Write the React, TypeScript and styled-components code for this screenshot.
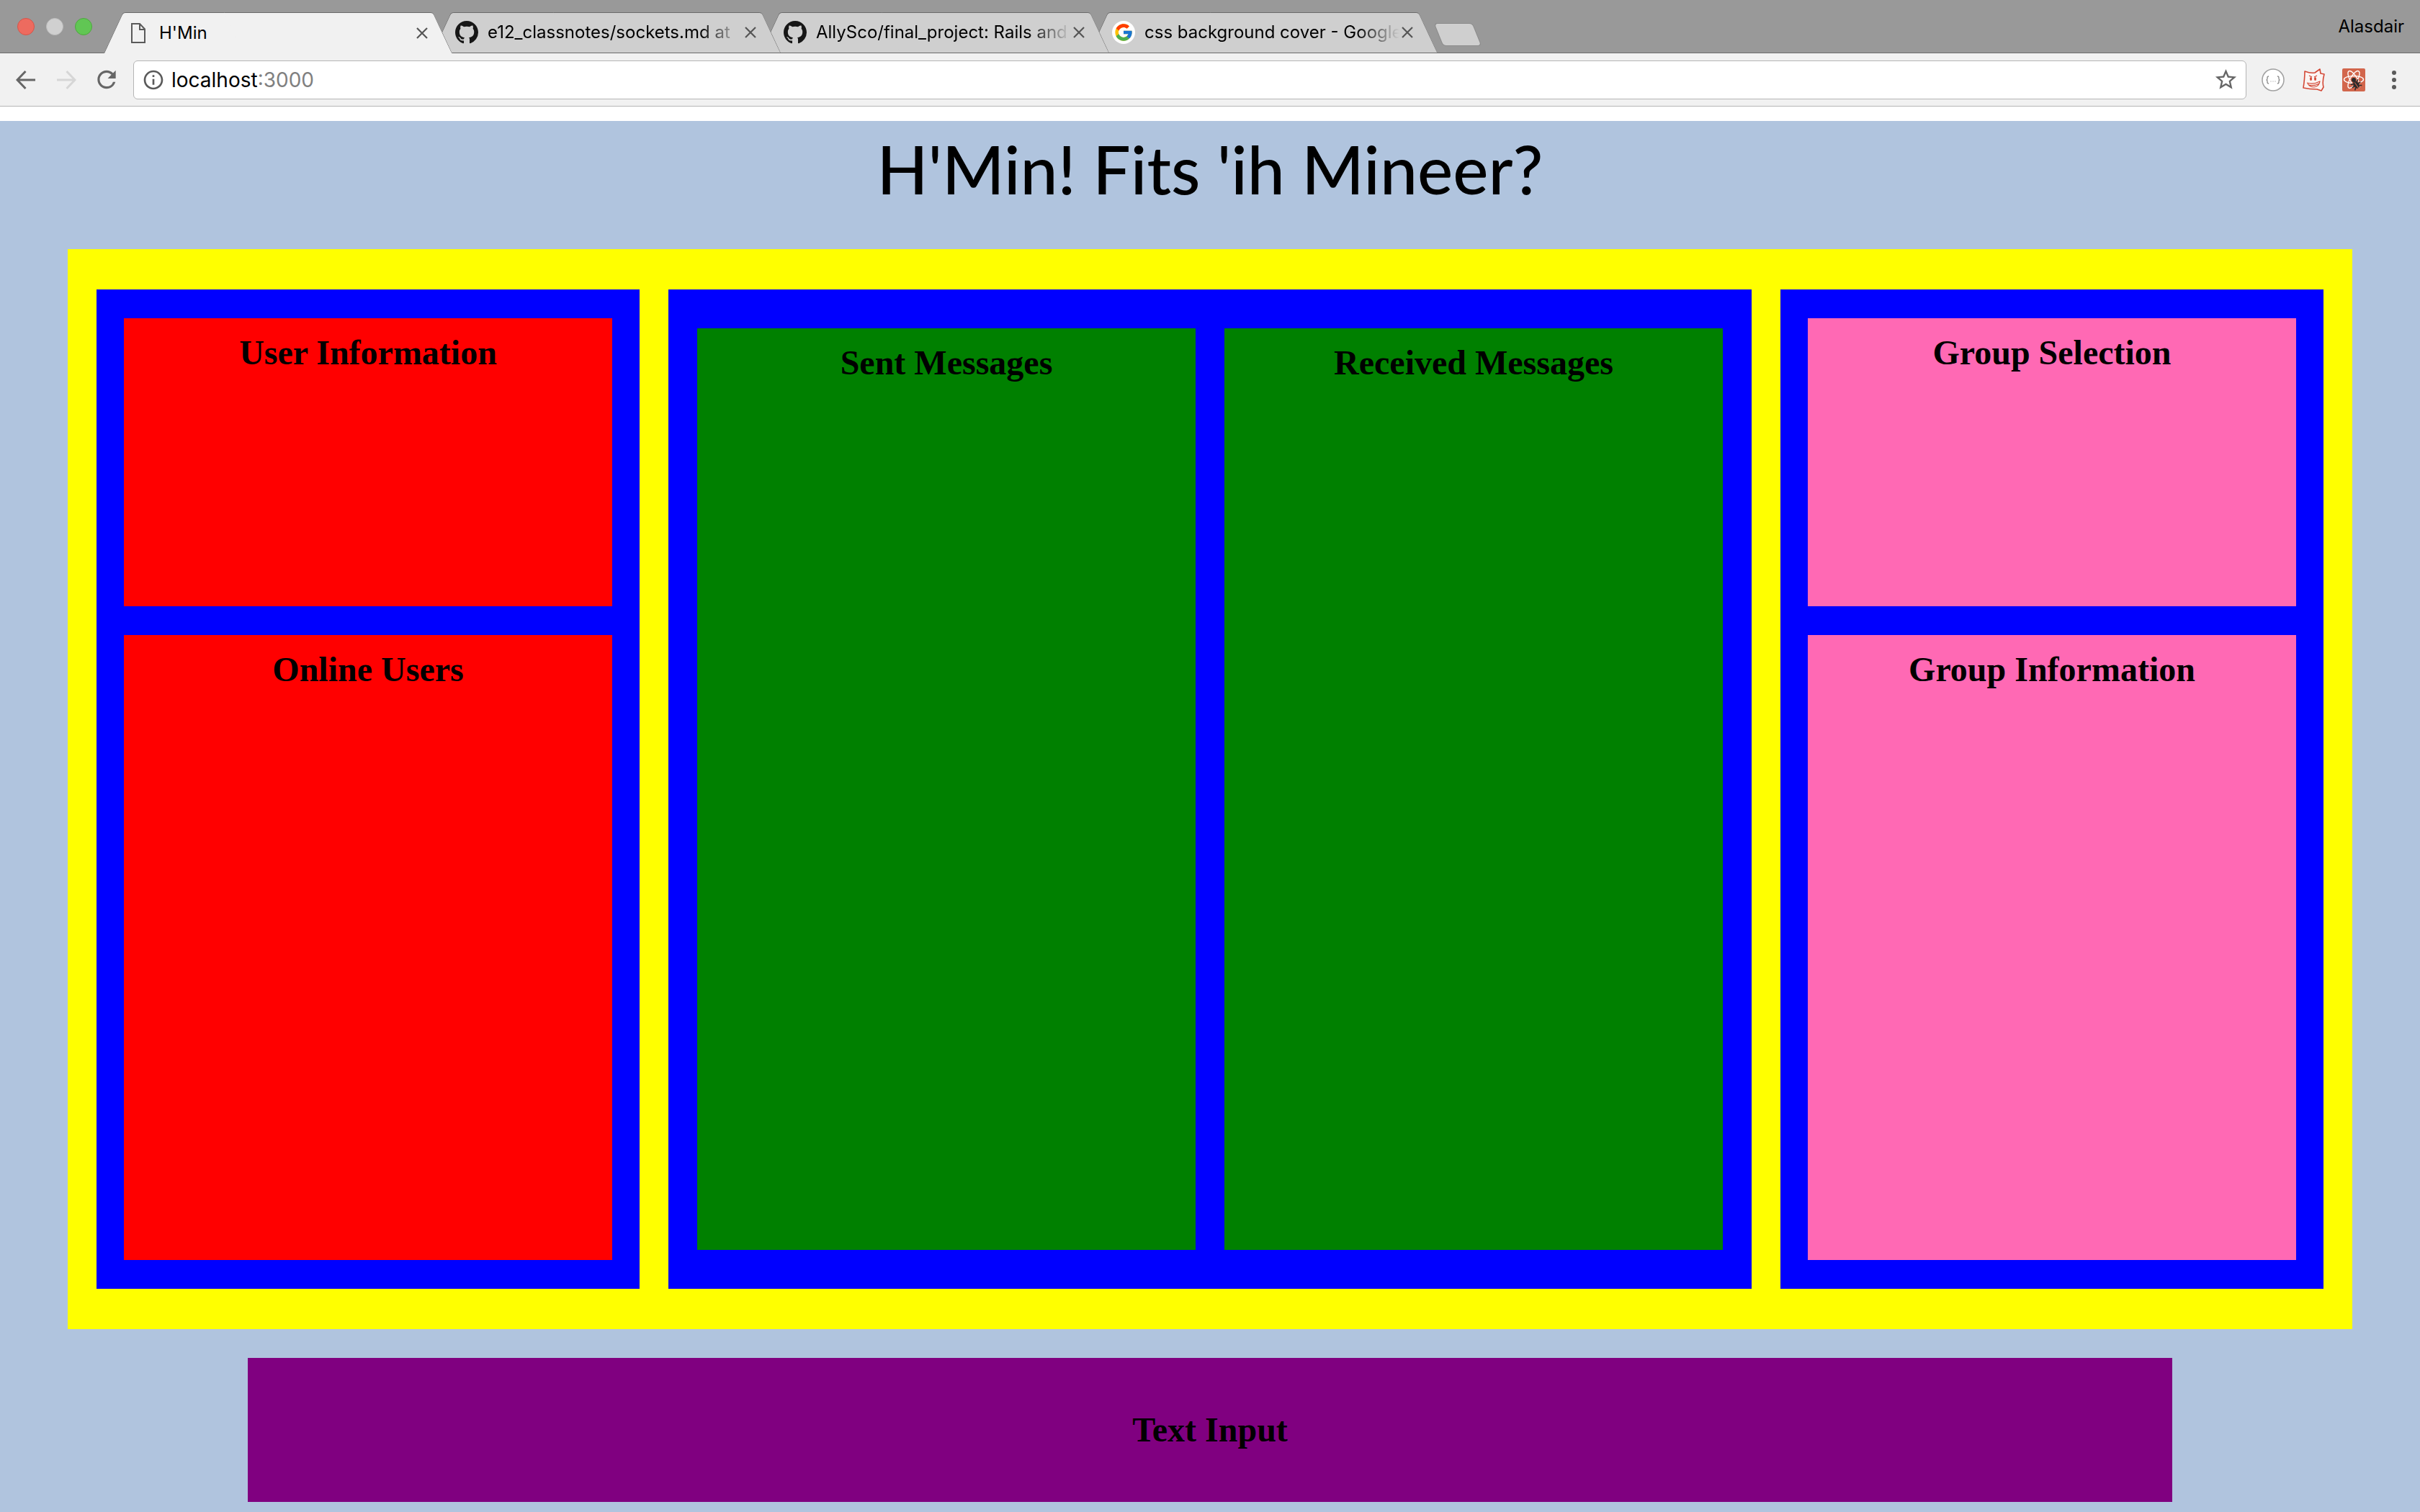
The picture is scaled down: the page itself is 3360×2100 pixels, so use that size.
import React from "react";
import styled, { createGlobalStyle } from "styled-components";
import { FcGoogle } from "react-icons/fc";
import { MdInfoOutline, MdRefresh, MdStarBorder } from "react-icons/md";

const ui = `Inter, "Liberation Sans", sans-serif`;
const serif = `"Liberation Serif", "Times New Roman", serif`;
const display = `Papyrus, Lato, sans-serif`;

const GlobalStyle = createGlobalStyle`
  *, *::before, *::after { box-sizing: border-box; }
  body { margin: 0; background: #ffffff; color: #000000; }
  button { border: 0; padding: 0; background: none; color: inherit; font: inherit; cursor: pointer; }
`;

const Window = styled.div`
  display: flex;
  flex-direction: column;
  min-height: 100vh;
`;

/* ---------- browser chrome ---------- */

const TabStrip = styled.header`
  display: flex;
  align-items: flex-end;
  height: 74px;
  padding: 0 22px 0 24px;
  background: #999999;
  box-shadow: inset 0 -1px #6b6b6b;
  font-family: ${ui};
  font-size: 24px;
  line-height: 30px;
`;

const WindowControls = styled.div`
  display: flex;
  flex: none;
  align-self: center;
  gap: 16px;
  width: 120px;
`;

const Light = styled.button<{ $fill: string; $edge: string }>`
  width: 24px;
  height: 24px;
  border: 1px solid ${(p) => p.$edge};
  border-radius: 50%;
  background: ${(p) => p.$fill};
`;

const Tabs = styled.nav`
  display: flex;
  min-width: 0;
  align-items: flex-end;
`;

const TabShell = styled.div<{ $active: boolean; $order: number }>`
  position: relative;
  z-index: ${(p) => p.$order};
  display: flex;
  width: 484px;
  min-width: 0;
  align-items: center;
  gap: 13px;
  height: ${(p) => (p.$active ? 57 : 56)}px;
  margin-bottom: ${(p) => (p.$active ? 0 : 1)}px;
  padding: 0 31px 0 32px;

  & + & { margin-left: -28px; }

  &::before,
  &::after {
    content: "";
    position: absolute;
    z-index: -1;
    top: 0;
    bottom: 0;
    background: ${(p) => (p.$active ? "#f1f1f1" : "#cfcfcf")};
    border-top: 1px solid #6b6b6b;
  }
  &::before {
    left: 0;
    right: 50%;
    border-left: 1px solid #6b6b6b;
    border-top-left-radius: 4px;
    transform: skewX(-25deg);
    transform-origin: left bottom;
  }
  &::after {
    left: 40%;
    right: 0;
    border-right: 1px solid #808080;
    border-top-right-radius: 4px;
    transform: skewX(25deg);
    transform-origin: right bottom;
  }
`;

const Favicon = styled.span`
  display: flex;
  flex: none;
  align-items: center;
  justify-content: center;
  width: 32px;
  height: 32px;
  color: #161616;
`;

const RoundFavicon = styled(Favicon)`
  border-radius: 50%;
  background: #ffffff;
`;

const TabTitle = styled.button<{ $fade: boolean }>`
  flex: 1;
  min-width: 0;
  overflow: hidden;
  text-align: left;
  white-space: nowrap;
  mask-image: ${(p) => (p.$fade ? "linear-gradient(to left, transparent, #000000 60px)" : "none")};
`;

const CloseButton = styled.button`
  display: flex;
  flex: none;
  align-items: center;
  justify-content: center;
  width: 22px;
  height: 32px;
  margin-left: -13px;
  color: #555555;
`;

const NewTabButton = styled.button`
  flex: none;
  align-self: center;
  width: 52px;
  height: 30px;
  margin: 22px 0 0 2px;
  border-radius: 4px;
  background: #cfcfcf;
  box-shadow: 0 0 0 1px #8a8a8a;
  transform: skewX(22deg);
`;

const Profile = styled.button`
  align-self: center;
  margin-left: auto;
`;

const Toolbar = styled.div`
  display: flex;
  align-items: center;
  gap: 18px;
  height: 74px;
  padding: 0 17px;
  border-bottom: 1px solid #b5b5b5;
  background: #f1f1f1;
`;

const ToolButton = styled.button<{ $dim?: boolean }>`
  display: flex;
  flex: none;
  align-items: center;
  justify-content: center;
  width: 38px;
  height: 38px;
  color: ${(p) => (p.$dim ? "#d6d6d6" : "#666666")};
`;

const AddressBar = styled.div`
  display: flex;
  flex: 1;
  min-width: 0;
  align-items: center;
  height: 54px;
  padding: 0 9px 0 11px;
  border: 1px solid #b5b5b5;
  border-radius: 6px;
  background: #ffffff;
  color: #5a5a5a;
  font-family: ${ui};
  font-size: 28px;
  line-height: 34px;
`;

const Address = styled.label`
  display: flex;
  flex: 1;
  margin-left: 9px;
  color: #808080;
`;

const AddressInput = styled.input`
  field-sizing: content;
  padding: 0;
  border: 0;
  outline: 0;
  background: none;
  color: #000000;
  font: inherit;
`;

/* ---------- page ---------- */

const Page = styled.main`
  display: flex;
  flex: 1;
  flex-direction: column;
  align-items: center;
  margin-top: 20px;
  padding-bottom: 14px;
  background: #b0c4de;
  font-family: ${serif};
`;

const Title = styled.h1`
  margin: 0;
  padding: 10px 0 56px;
  font-family: ${display};
  font-size: 93px;
  font-weight: 500;
  line-height: 112px;
`;

const Board = styled.div`
  display: grid;
  grid-template-columns: 377fr 752fr 377fr;
  gap: 40px;
  align-self: stretch;
  margin: 0 94px;
  padding: 56px 40px;
  background: #ffff00;
`;

const SideColumn = styled.div`
  display: flex;
  flex-direction: column;
  gap: 40px;
  padding: 40px 38px;
  background: #0000ff;
`;

const MessageColumn = styled.div`
  display: grid;
  grid-template-columns: 1fr 1fr;
  gap: 40px;
  padding: 54px 40px;
  background: #0000ff;
`;

const Panel = styled.section<{ $color: string; $tall?: boolean }>`
  flex: ${(p) => (p.$tall ? "1 0 868px" : "0 0 400px")};
  padding: 20px;
  background: ${(p) => p.$color};
`;

const Heading = styled.h2`
  margin: 0;
  font-size: 48px;
  font-weight: 700;
  line-height: 56px;
  text-align: center;
`;

const Composer = styled.section`
  display: flex;
  align-items: center;
  justify-content: center;
  align-self: stretch;
  height: 200px;
  margin: 40px 344px 0;
  background: #800080;
`;

/* ---------- drawings ---------- */

const PageIcon = () => (
  <svg width="32" height="32" viewBox="0 0 32 32" fill="none" stroke="#5a5a5a" strokeWidth="2">
    <path d="M7 3H18L25 10.500V29H7ZM18 3V11H25" />
  </svg>
);

const GithubIcon = () => (
  <svg width="32" height="32" viewBox="0 0 16 16" fill="currentColor">
    <path d="M8 0C3.580 0 0 3.580 0 8c0 3.540 2.290 6.530 5.470 7.590.4.070.55-.17.55-.38 0-.19-.01-.82-.01-1.490-2.010.37-2.530-.49-2.690-.94-.09-.23-.48-.94-.82-1.130-.28-.15-.68-.52-.01-.53.63-.01 1.080.58 1.230.82.72 1.210 1.870.87 2.330.66.07-.52.28-.87.51-1.070-1.780-.2-3.640-.89-3.640-3.950 0-.87.31-1.590.82-2.150-.08-.2-.36-1.020.08-2.120 0 0 .67-.21 2.200.82.64-.18 1.320-.27 2-.27.68 0 1.360.09 2 .27 1.530-1.040 2.200-.82 2.200-.82.44 1.100.16 1.920.08 2.120.51.56.82 1.270.82 2.150 0 3.070-1.870 3.750-3.650 3.950.29.25.54.73.54 1.480 0 1.070-.01 1.930-.01 2.200 0 .21.15.46.55.38A8.013 8.013 0 0 0 16 8c0-4.420-3.580-8-8-8z" />
  </svg>
);

const CloseIcon = () => (
  <svg width="16" height="16" viewBox="0 0 16 16" stroke="currentColor" strokeWidth="2.200">
    <path d="M1 1L15 15M15 1L1 15" />
  </svg>
);

const ArrowIcon = ({ forward = false }: { forward?: boolean }) => (
  <svg width="28" height="28" viewBox="0 0 28 28" fill="none" stroke="currentColor" strokeWidth="3">
    <path d={forward ? "M1 14H26M14.500 2L26 14L14.500 26" : "M27 14H2M13.500 2L2 14L13.500 26"} />
  </svg>
);

const JsonIcon = () => (
  <svg width="32" height="32" viewBox="0 0 32 32" fill="none" stroke="#8a8a8a">
    <circle cx="16" cy="16" r="15" fill="#ffffff" stroke="#a0a0a0" strokeWidth="1.500" />
    <path d="M10 11Q8 11 8 13V14.500Q8 16 6.500 16Q8 16 8 17.500V19Q8 21 10 21M22 11Q24 11 24 13V14.500Q24 16 25.500 16Q24 16 24 17.500V19Q24 21 22 21" strokeWidth="1.300" />
    <path d="M12.500 18H13.500M15.500 18H16.500M18.500 18H19.500" strokeWidth="1" />
  </svg>
);

const FaceIcon = () => (
  <svg width="32" height="32" viewBox="0 0 32 32" fill="none" stroke="#d34836" strokeLinejoin="round">
    <path d="M4 4Q12 7 18 6L25 1L26 7L31 8Q28 19 30 26L27 31L21 29Q11 29 2 27Q4 14 4 4Z" fill="#fbf4f2" strokeWidth="1.600" />
    <path d="M7 20Q16 23 25 18Q24 25 17 26Q11 26 8 21M10 23Q17 25 24 21" strokeWidth="1.200" />
    <path d="M10 10L14 12M17 12L21 10" strokeWidth="1.200" />
    <ellipse cx="12.500" cy="14.500" rx="1.500" ry="2.500" fill="#d34836" stroke="none" />
    <ellipse cx="18.500" cy="14.500" rx="1.500" ry="2.500" fill="#d34836" stroke="none" />
  </svg>
);

const ReactBugIcon = () => (
  <svg width="32" height="32" viewBox="0 0 32 32" fill="none">
    <rect width="32" height="32" rx="2" fill="#d2664c" />
    <g stroke="#ffffff" strokeWidth="1.400">
      <ellipse cx="16" cy="15.500" rx="13.500" ry="5" />
      <ellipse cx="16" cy="15.500" rx="13.500" ry="5" transform="rotate(60 16 15.500)" />
      <ellipse cx="16" cy="15.500" rx="13.500" ry="5" transform="rotate(120 16 15.500)" />
    </g>
    <g transform="rotate(-35 19 22)">
      <ellipse cx="19" cy="22.500" rx="5" ry="6.500" fill="#d2664c" />
      <path d="M13 18L16 20M25 18L22 20M12 23H26M13 28L16 26M25 28L22 26" stroke="#2b2b2b" strokeWidth="1.500" />
      <ellipse cx="19" cy="23" rx="3.800" ry="5.500" fill="#2b2b2b" />
      <path d="M19 19V29" stroke="#d2664c" />
    </g>
    <circle cx="16" cy="16" r="3" fill="#2b2b2b" />
  </svg>
);

const MenuIcon = () => (
  <svg width="28" height="28" viewBox="0 0 28 28" fill="#5a5a5a">
    <circle cx="14" cy="4" r="3" />
    <circle cx="14" cy="14" r="3" />
    <circle cx="14" cy="24" r="3" />
  </svg>
);

const tabs = [
  { title: "H'Min", icon: <Favicon><PageIcon /></Favicon> },
  { title: "e12_classnotes/sockets.md at", icon: <Favicon><GithubIcon /></Favicon> },
  { title: "AllySco/final_project: Rails and", icon: <Favicon><GithubIcon /></Favicon> },
  { title: "css background cover - Google", icon: <RoundFavicon><FcGoogle size={28} /></RoundFavicon> },
];

export default function App() {
  return (
    <Window>
      <GlobalStyle />
      <TabStrip>
        <WindowControls>
          <Light aria-label="Close window" $fill="#ed6b5f" $edge="#d5554a" />
          <Light aria-label="Minimise window" $fill="#d0d0d0" $edge="#bcbcbc" />
          <Light aria-label="Zoom window" $fill="#61c654" $edge="#4ea73f" />
        </WindowControls>
        <Tabs aria-label="Tabs">
          {tabs.map((tab, i) => (
            <TabShell key={tab.title} $active={i === 0} $order={tabs.length - i}>
              {tab.icon}
              <TabTitle $fade={i > 0}>{tab.title}</TabTitle>
              <CloseButton aria-label="Close tab"><CloseIcon /></CloseButton>
            </TabShell>
          ))}
        </Tabs>
        <NewTabButton aria-label="New tab" />
        <Profile>Alasdair</Profile>
      </TabStrip>
      <Toolbar>
        <ToolButton aria-label="Back"><ArrowIcon /></ToolButton>
        <ToolButton aria-label="Forward" $dim><ArrowIcon forward /></ToolButton>
        <ToolButton aria-label="Reload"><MdRefresh size={39} /></ToolButton>
        <AddressBar>
          <MdInfoOutline size={32} />
          <Address>
            <AddressInput aria-label="Address" defaultValue="localhost" />
            :3000
          </Address>
          <ToolButton aria-label="Bookmark"><MdStarBorder size={35} /></ToolButton>
        </AddressBar>
        <ToolButton aria-label="JSON formatter"><JsonIcon /></ToolButton>
        <ToolButton aria-label="Sticker extension"><FaceIcon /></ToolButton>
        <ToolButton aria-label="React developer tools"><ReactBugIcon /></ToolButton>
        <ToolButton aria-label="Menu"><MenuIcon /></ToolButton>
      </Toolbar>
      <Page>
        <Title>H'Min! Fits 'ih Mineer?</Title>
        <Board>
          <SideColumn>
            <Panel $color="#ff0000"><Heading>User Information</Heading></Panel>
            <Panel $color="#ff0000" $tall><Heading>Online Users</Heading></Panel>
          </SideColumn>
          <MessageColumn>
            <Panel $color="#008000"><Heading>Sent Messages</Heading></Panel>
            <Panel $color="#008000"><Heading>Received Messages</Heading></Panel>
          </MessageColumn>
          <SideColumn>
            <Panel $color="#ff69b4"><Heading>Group Selection</Heading></Panel>
            <Panel $color="#ff69b4" $tall><Heading>Group Information</Heading></Panel>
          </SideColumn>
        </Board>
        <Composer><Heading>Text Input</Heading></Composer>
      </Page>
    </Window>
  );
}
